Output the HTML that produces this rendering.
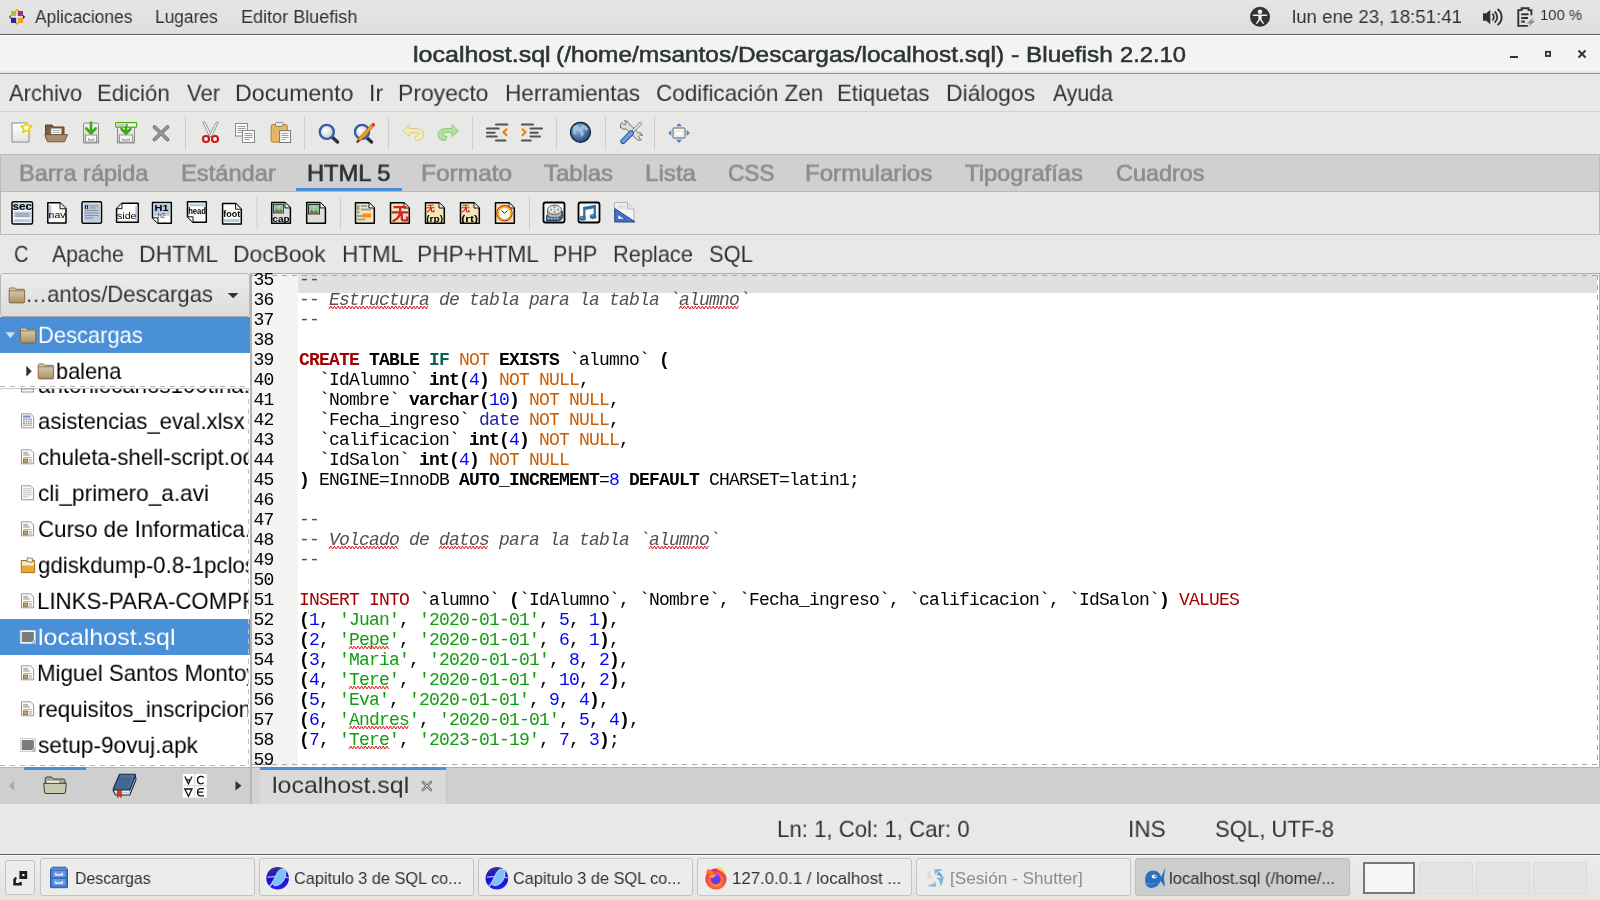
<!DOCTYPE html>
<html><head><meta charset="utf-8">
<style>
html,body{margin:0;padding:0;width:1600px;height:900px;overflow:hidden;background:#e8e8e7;font-family:"Liberation Sans",sans-serif;}
.r{position:absolute;}
.t{position:absolute;white-space:pre;line-height:1;transform-origin:0 0;font-family:"Liberation Sans",sans-serif;will-change:transform;}
.clip{position:absolute;overflow:hidden;}
svg{position:absolute;overflow:visible;}
.ln{position:absolute;left:0;width:21.5px;text-align:right;font-family:"Liberation Mono",monospace;font-size:18.0px;letter-spacing:-0.8018px;line-height:20px;color:#000;white-space:pre;will-change:transform;}
.cl{position:absolute;left:47px;font-family:"Liberation Mono",monospace;font-size:18.0px;letter-spacing:-0.8018px;line-height:20px;color:#000;white-space:pre;will-change:transform;}
</style></head><body>
<!-- top panel -->
<div class="r" style="left:0;top:0;width:1600px;height:34px;background:linear-gradient(#e6e6e6,#dedede);"></div>
<div class="r" style="left:0;top:34px;width:1600px;height:1px;background:#5f5f5f;"></div>
<div class="r" style="left:0;top:35px;width:1600px;height:1px;background:#ffffff;"></div>
<!-- title -->
<div class="r" style="left:0;top:36px;width:1600px;height:36px;background:#f3f3f3;"></div>
<div class="r" style="left:0;top:71px;width:1600px;height:2px;background:linear-gradient(#ececec,#e2e2e2);"></div>
<div class="r" style="left:0;top:73px;width:1600px;height:1px;background:#8f918b;"></div>
<div class="r" style="left:0;top:74px;width:1600px;height:1px;background:#eeeeed;"></div>
<!-- menu line -->
<div class="r" style="left:0;top:111px;width:1600px;height:1px;background:#d3d3d1;"></div>
<!-- tab bar -->
<div class="r" style="left:0;top:154px;width:1600px;height:37px;background:#d0d0d0;"></div>
<div class="r" style="left:0;top:154px;width:1600px;height:1px;background:#b9b9b7;"></div>
<div class="r" style="left:0;top:191px;width:1600px;height:1px;background:#b9b9b7;"></div>
<div class="r" style="left:0;top:154px;width:1px;height:81px;background:#b9b9b7;"></div>
<div class="r" style="left:1599px;top:154px;width:1px;height:81px;background:#b9b9b7;"></div>
<div class="r" style="left:296px;top:188px;width:106px;height:3px;background:#4a90d9;"></div>
<!-- html toolbar line -->
<div class="r" style="left:0;top:234px;width:1600px;height:1px;background:#b9b9b7;"></div>
<!-- snippets line -->
<div class="r" style="left:0;top:273px;width:1600px;height:1px;background:#b4b4b0;"></div>
<!-- sidebar -->
<div class="r" style="left:0;top:273px;width:250px;height:494px;background:#ffffff;"></div>
<div class="r" style="left:0;top:273px;width:250px;height:44px;background:linear-gradient(#ececeb,#dcdcdb);border:1px solid #b8b8b6;border-bottom-color:#a8a8a6;box-sizing:border-box;border-radius:3px;"></div>
<div class="r" style="left:0;top:317px;width:250px;height:36px;background:#4a90d9;"></div>
<div class="r" style="left:0;top:388px;width:249px;height:1px;background:#c8c8c6;"></div>
<div class="r" style="left:0;top:386px;width:248px;height:1px;background:repeating-linear-gradient(90deg,#b4b4b4 0 5px,transparent 5px 10px);"></div>
<div class="r" style="left:0;top:619px;width:250px;height:36px;background:#4a90d9;"></div>
<div class="r" style="left:0;top:765px;width:248px;height:1px;background:repeating-linear-gradient(90deg,#b4b4b4 0 5px,transparent 5px 10px);"></div>
<div class="r" style="left:248px;top:389px;width:1px;height:376px;background:repeating-linear-gradient(180deg,#c4c4c4 0 5px,transparent 5px 10px);"></div>
<!-- pane handle -->
<div class="r" style="left:250px;top:273px;width:2px;height:494px;background:#b2b4ae;"></div>
<!-- editor -->
<div class="r" style="left:252px;top:273px;width:1348px;height:494px;background:#ffffff;"></div>
<div class="r" style="left:252px;top:273px;width:46px;height:494px;background:#f4f4f3;"></div>
<div class="r" style="left:250px;top:273px;width:1350px;height:1px;background:#b0b0aa;"></div>
<div class="r" style="left:1599px;top:273px;width:1px;height:494px;background:#b0b0aa;"></div>
<div class="r" style="left:298px;top:274px;width:1299px;height:19px;background:#e0e0e0;"></div>
<div class="r" style="left:252px;top:275px;width:1345px;height:1px;background:repeating-linear-gradient(90deg,#a8a8a8 0 5px,transparent 5px 10px);"></div>
<div class="r" style="left:252px;top:764px;width:1345px;height:1px;background:repeating-linear-gradient(90deg,#a8a8a8 0 5px,transparent 5px 10px);"></div>
<div class="r" style="left:1597px;top:275px;width:1px;height:489px;background:repeating-linear-gradient(180deg,#a8a8a8 0 5px,transparent 5px 10px);"></div>
<div class="r" style="left:0;top:767px;width:1600px;height:1px;background:#b4b4ae;"></div>
<div class="clip" style="left:252px;top:273px;width:1345px;height:492px;">
<div class="ln" style="top:-2.79px">35</div>
<div class="cl" style="top:-2.79px"><span style="color:#505050">--</span></div>
<div class="ln" style="top:17.21px">36</div>
<div class="cl" style="top:17.21px"><span style="color:#505050">-- </span><span style="color:#505050;font-style:italic">Estructura de tabla para la tabla `alumno`</span></div>
<div class="ln" style="top:37.21px">37</div>
<div class="cl" style="top:37.21px"><span style="color:#505050">--</span></div>
<div class="ln" style="top:57.21px">38</div>
<div class="ln" style="top:77.21px">39</div>
<div class="cl" style="top:77.21px"><span style="color:#a40000;font-weight:700">CREATE</span><span style="color:#000000"> </span><span style="color:#000000;font-weight:700">TABLE</span><span style="color:#000000"> </span><span style="color:#0e5e58;font-weight:700">IF</span><span style="color:#000000"> </span><span style="color:#ce5c00">NOT</span><span style="color:#000000"> </span><span style="color:#000000;font-weight:700">EXISTS</span><span style="color:#000000"> `alumno` </span><span style="color:#000000;font-weight:700">(</span></div>
<div class="ln" style="top:97.21px">40</div>
<div class="cl" style="top:97.21px"><span style="color:#000000">  `IdAlumno` </span><span style="color:#000000;font-weight:700">int(</span><span style="color:#0000ff">4</span><span style="color:#000000;font-weight:700">)</span><span style="color:#000000"> </span><span style="color:#ce5c00">NOT NULL</span><span style="color:#000000">,</span></div>
<div class="ln" style="top:117.21px">41</div>
<div class="cl" style="top:117.21px"><span style="color:#000000">  `Nombre` </span><span style="color:#000000;font-weight:700">varchar(</span><span style="color:#0000ff">10</span><span style="color:#000000;font-weight:700">)</span><span style="color:#000000"> </span><span style="color:#ce5c00">NOT NULL</span><span style="color:#000000">,</span></div>
<div class="ln" style="top:137.21px">42</div>
<div class="cl" style="top:137.21px"><span style="color:#000000">  `Fecha_ingreso` </span><span style="color:#2222a0">date</span><span style="color:#000000"> </span><span style="color:#ce5c00">NOT NULL</span><span style="color:#000000">,</span></div>
<div class="ln" style="top:157.21px">43</div>
<div class="cl" style="top:157.21px"><span style="color:#000000">  `calificacion` </span><span style="color:#000000;font-weight:700">int(</span><span style="color:#0000ff">4</span><span style="color:#000000;font-weight:700">)</span><span style="color:#000000"> </span><span style="color:#ce5c00">NOT NULL</span><span style="color:#000000">,</span></div>
<div class="ln" style="top:177.21px">44</div>
<div class="cl" style="top:177.21px"><span style="color:#000000">  `IdSalon` </span><span style="color:#000000;font-weight:700">int(</span><span style="color:#0000ff">4</span><span style="color:#000000;font-weight:700">)</span><span style="color:#000000"> </span><span style="color:#ce5c00">NOT NULL</span></div>
<div class="ln" style="top:197.21px">45</div>
<div class="cl" style="top:197.21px"><span style="color:#000000;font-weight:700">)</span><span style="color:#000000"> ENGINE=InnoDB </span><span style="color:#000000;font-weight:700">AUTO_INCREMENT</span><span style="color:#000000">=</span><span style="color:#0000ff">8</span><span style="color:#000000"> </span><span style="color:#000000;font-weight:700">DEFAULT</span><span style="color:#000000"> CHARSET=latin1;</span></div>
<div class="ln" style="top:217.21px">46</div>
<div class="ln" style="top:237.21px">47</div>
<div class="cl" style="top:237.21px"><span style="color:#505050">--</span></div>
<div class="ln" style="top:257.21px">48</div>
<div class="cl" style="top:257.21px"><span style="color:#505050">-- </span><span style="color:#505050;font-style:italic">Volcado de datos para la tabla `alumno`</span></div>
<div class="ln" style="top:277.21px">49</div>
<div class="cl" style="top:277.21px"><span style="color:#505050">--</span></div>
<div class="ln" style="top:297.21px">50</div>
<div class="ln" style="top:317.21px">51</div>
<div class="cl" style="top:317.21px"><span style="color:#a40000">INSERT INTO</span><span style="color:#000000"> `alumno` </span><span style="color:#000000;font-weight:700">(</span><span style="color:#000000">`IdAlumno`, `Nombre`, `Fecha_ingreso`, `calificacion`, `IdSalon`</span><span style="color:#000000;font-weight:700">)</span><span style="color:#000000"> </span><span style="color:#a40000">VALUES</span></div>
<div class="ln" style="top:337.21px">52</div>
<div class="cl" style="top:337.21px"><span style="color:#000000;font-weight:700">(</span><span style="color:#0000ff">1</span><span style="color:#000000">, </span><span style="color:#109d10">&#x27;Juan&#x27;</span><span style="color:#000000">, </span><span style="color:#109d10">&#x27;2020-01-01&#x27;</span><span style="color:#000000">, </span><span style="color:#0000ff">5</span><span style="color:#000000">, </span><span style="color:#0000ff">1</span><span style="color:#000000;font-weight:700">)</span><span style="color:#000000">,</span></div>
<div class="ln" style="top:357.21px">53</div>
<div class="cl" style="top:357.21px"><span style="color:#000000;font-weight:700">(</span><span style="color:#0000ff">2</span><span style="color:#000000">, </span><span style="color:#109d10">&#x27;Pepe&#x27;</span><span style="color:#000000">, </span><span style="color:#109d10">&#x27;2020-01-01&#x27;</span><span style="color:#000000">, </span><span style="color:#0000ff">6</span><span style="color:#000000">, </span><span style="color:#0000ff">1</span><span style="color:#000000;font-weight:700">)</span><span style="color:#000000">,</span></div>
<div class="ln" style="top:377.21px">54</div>
<div class="cl" style="top:377.21px"><span style="color:#000000;font-weight:700">(</span><span style="color:#0000ff">3</span><span style="color:#000000">, </span><span style="color:#109d10">&#x27;Maria&#x27;</span><span style="color:#000000">, </span><span style="color:#109d10">&#x27;2020-01-01&#x27;</span><span style="color:#000000">, </span><span style="color:#0000ff">8</span><span style="color:#000000">, </span><span style="color:#0000ff">2</span><span style="color:#000000;font-weight:700">)</span><span style="color:#000000">,</span></div>
<div class="ln" style="top:397.21px">55</div>
<div class="cl" style="top:397.21px"><span style="color:#000000;font-weight:700">(</span><span style="color:#0000ff">4</span><span style="color:#000000">, </span><span style="color:#109d10">&#x27;Tere&#x27;</span><span style="color:#000000">, </span><span style="color:#109d10">&#x27;2020-01-01&#x27;</span><span style="color:#000000">, </span><span style="color:#0000ff">10</span><span style="color:#000000">, </span><span style="color:#0000ff">2</span><span style="color:#000000;font-weight:700">)</span><span style="color:#000000">,</span></div>
<div class="ln" style="top:417.21px">56</div>
<div class="cl" style="top:417.21px"><span style="color:#000000;font-weight:700">(</span><span style="color:#0000ff">5</span><span style="color:#000000">, </span><span style="color:#109d10">&#x27;Eva&#x27;</span><span style="color:#000000">, </span><span style="color:#109d10">&#x27;2020-01-01&#x27;</span><span style="color:#000000">, </span><span style="color:#0000ff">9</span><span style="color:#000000">, </span><span style="color:#0000ff">4</span><span style="color:#000000;font-weight:700">)</span><span style="color:#000000">,</span></div>
<div class="ln" style="top:437.21px">57</div>
<div class="cl" style="top:437.21px"><span style="color:#000000;font-weight:700">(</span><span style="color:#0000ff">6</span><span style="color:#000000">, </span><span style="color:#109d10">&#x27;Andres&#x27;</span><span style="color:#000000">, </span><span style="color:#109d10">&#x27;2020-01-01&#x27;</span><span style="color:#000000">, </span><span style="color:#0000ff">5</span><span style="color:#000000">, </span><span style="color:#0000ff">4</span><span style="color:#000000;font-weight:700">)</span><span style="color:#000000">,</span></div>
<div class="ln" style="top:457.21px">58</div>
<div class="cl" style="top:457.21px"><span style="color:#000000;font-weight:700">(</span><span style="color:#0000ff">7</span><span style="color:#000000">, </span><span style="color:#109d10">&#x27;Tere&#x27;</span><span style="color:#000000">, </span><span style="color:#109d10">&#x27;2023-01-19&#x27;</span><span style="color:#000000">, </span><span style="color:#0000ff">7</span><span style="color:#000000">, </span><span style="color:#0000ff">3</span><span style="color:#000000;font-weight:700">)</span><span style="color:#000000">;</span></div>
<div class="ln" style="top:477.21px">59</div>
</div>
<svg style="left:329.0px;top:306.3px" width="100" height="4"><polyline points="0.0,3 1.8,0 3.6,3 5.4,0 7.2,3 9.0,0 10.8,3 12.6,0 14.4,3 16.2,0 18.0,3 19.8,0 21.6,3 23.4,0 25.2,3 27.0,0 28.8,3 30.6,0 32.4,3 34.2,0 36.0,3 37.8,0 39.6,3 41.4,0 43.2,3 45.0,0 46.8,3 48.6,0 50.4,3 52.2,0 54.0,3 55.8,0 57.6,3 59.4,0 61.2,3 63.0,0 64.8,3 66.6,0 68.4,3 70.2,0 72.0,3 73.8,0 75.6,3 77.4,0 79.2,3 81.0,0 82.8,3 84.6,0 86.4,3 88.2,0 90.0,3 91.8,0 93.6,3 95.4,0 97.2,3 99.0,0" fill="none" stroke="#e01b24" stroke-width="1"/></svg>
<svg style="left:679.0px;top:306.3px" width="60" height="4"><polyline points="0.0,3 1.8,0 3.6,3 5.4,0 7.2,3 9.0,0 10.8,3 12.6,0 14.4,3 16.2,0 18.0,3 19.8,0 21.6,3 23.4,0 25.2,3 27.0,0 28.8,3 30.6,0 32.4,3 34.2,0 36.0,3 37.8,0 39.6,3 41.4,0 43.2,3 45.0,0 46.8,3 48.6,0 50.4,3 52.2,0 54.0,3 55.8,0 57.6,3 59.4,0" fill="none" stroke="#e01b24" stroke-width="1"/></svg>
<svg style="left:329.0px;top:546.3px" width="70" height="4"><polyline points="0.0,3 1.8,0 3.6,3 5.4,0 7.2,3 9.0,0 10.8,3 12.6,0 14.4,3 16.2,0 18.0,3 19.8,0 21.6,3 23.4,0 25.2,3 27.0,0 28.8,3 30.6,0 32.4,3 34.2,0 36.0,3 37.8,0 39.6,3 41.4,0 43.2,3 45.0,0 46.8,3 48.6,0 50.4,3 52.2,0 54.0,3 55.8,0 57.6,3 59.4,0 61.2,3 63.0,0 64.8,3 66.6,0 68.4,3" fill="none" stroke="#e01b24" stroke-width="1"/></svg>
<svg style="left:439.0px;top:546.3px" width="50" height="4"><polyline points="0.0,3 1.8,0 3.6,3 5.4,0 7.2,3 9.0,0 10.8,3 12.6,0 14.4,3 16.2,0 18.0,3 19.8,0 21.6,3 23.4,0 25.2,3 27.0,0 28.8,3 30.6,0 32.4,3 34.2,0 36.0,3 37.8,0 39.6,3 41.4,0 43.2,3 45.0,0 46.8,3 48.6,0" fill="none" stroke="#e01b24" stroke-width="1"/></svg>
<svg style="left:649.0px;top:546.3px" width="60" height="4"><polyline points="0.0,3 1.8,0 3.6,3 5.4,0 7.2,3 9.0,0 10.8,3 12.6,0 14.4,3 16.2,0 18.0,3 19.8,0 21.6,3 23.4,0 25.2,3 27.0,0 28.8,3 30.6,0 32.4,3 34.2,0 36.0,3 37.8,0 39.6,3 41.4,0 43.2,3 45.0,0 46.8,3 48.6,0 50.4,3 52.2,0 54.0,3 55.8,0 57.6,3 59.4,0" fill="none" stroke="#e01b24" stroke-width="1"/></svg>
<svg style="left:349.0px;top:646.3px" width="40" height="4"><polyline points="0.0,3 1.8,0 3.6,3 5.4,0 7.2,3 9.0,0 10.8,3 12.6,0 14.4,3 16.2,0 18.0,3 19.8,0 21.6,3 23.4,0 25.2,3 27.0,0 28.8,3 30.6,0 32.4,3 34.2,0 36.0,3 37.8,0 39.6,3" fill="none" stroke="#e01b24" stroke-width="1"/></svg>
<svg style="left:349.0px;top:686.3px" width="40" height="4"><polyline points="0.0,3 1.8,0 3.6,3 5.4,0 7.2,3 9.0,0 10.8,3 12.6,0 14.4,3 16.2,0 18.0,3 19.8,0 21.6,3 23.4,0 25.2,3 27.0,0 28.8,3 30.6,0 32.4,3 34.2,0 36.0,3 37.8,0 39.6,3" fill="none" stroke="#e01b24" stroke-width="1"/></svg>
<svg style="left:349.0px;top:726.3px" width="60" height="4"><polyline points="0.0,3 1.8,0 3.6,3 5.4,0 7.2,3 9.0,0 10.8,3 12.6,0 14.4,3 16.2,0 18.0,3 19.8,0 21.6,3 23.4,0 25.2,3 27.0,0 28.8,3 30.6,0 32.4,3 34.2,0 36.0,3 37.8,0 39.6,3 41.4,0 43.2,3 45.0,0 46.8,3 48.6,0 50.4,3 52.2,0 54.0,3 55.8,0 57.6,3 59.4,0" fill="none" stroke="#e01b24" stroke-width="1"/></svg>
<svg style="left:349.0px;top:746.3px" width="40" height="4"><polyline points="0.0,3 1.8,0 3.6,3 5.4,0 7.2,3 9.0,0 10.8,3 12.6,0 14.4,3 16.2,0 18.0,3 19.8,0 21.6,3 23.4,0 25.2,3 27.0,0 28.8,3 30.6,0 32.4,3 34.2,0 36.0,3 37.8,0 39.6,3" fill="none" stroke="#e01b24" stroke-width="1"/></svg>
<!-- bottom tabs -->
<div class="r" style="left:0;top:768px;width:1600px;height:36px;background:#cfcfcf;"></div>
<div class="r" style="left:24px;top:767px;width:62px;height:3px;background:#4a90d9;"></div>
<div class="r" style="left:250px;top:767px;width:2px;height:37px;background:#b8b8b4;"></div>
<div class="r" style="left:252px;top:768px;width:8px;height:36px;background:#d4d4d4;"></div>
<div class="r" style="left:260px;top:768px;width:186px;height:36px;background:#dadada;"></div>
<div class="r" style="left:260px;top:767px;width:186px;height:3px;background:#4a90d9;"></div>
<div class="r" style="left:446px;top:768px;width:1px;height:36px;background:#c4c4c4;"></div>
<!-- taskbar -->
<div class="r" style="left:0;top:854px;width:1600px;height:1px;background:#606060;"></div>
<div class="r" style="left:0;top:855px;width:1600px;height:1px;background:#f8f8f8;"></div>
<div class="r" style="left:0;top:856px;width:1600px;height:44px;background:linear-gradient(#ebebea,#e4e4e3);"></div>
<div class="r" style="left:5px;top:860px;width:30px;height:35px;border:1px solid #c4c4c2;border-radius:3px;box-sizing:border-box;background:#ececeb;"></div>
<div class="r" style="left:40px;top:858px;width:215px;height:38px;border:1px solid #c4c4c2;border-radius:3px;box-sizing:border-box;background:#ececeb;"></div>
<div class="r" style="left:259px;top:858px;width:215px;height:38px;border:1px solid #c4c4c2;border-radius:3px;box-sizing:border-box;background:#ececeb;"></div>
<div class="r" style="left:478px;top:858px;width:215px;height:38px;border:1px solid #c4c4c2;border-radius:3px;box-sizing:border-box;background:#ececeb;"></div>
<div class="r" style="left:697px;top:858px;width:215px;height:38px;border:1px solid #c4c4c2;border-radius:3px;box-sizing:border-box;background:#ececeb;"></div>
<div class="r" style="left:916px;top:858px;width:215px;height:38px;border:1px solid #c4c4c2;border-radius:3px;box-sizing:border-box;background:#ececeb;"></div>
<div class="r" style="left:1135px;top:858px;width:215px;height:38px;border:1px solid #bdbdbb;border-radius:3px;box-sizing:border-box;background:#cdcdcd;"></div>
<div class="r" style="left:1363px;top:862px;width:52px;height:32px;border:2px solid #787878;box-sizing:border-box;background:#f6f5f4;"></div>
<div class="r" style="left:1419px;top:862px;width:54px;height:32px;border:1px solid #dadad8;border-radius:2px;box-sizing:border-box;background:#e4e4e3;"></div>
<div class="r" style="left:1476px;top:862px;width:54px;height:32px;border:1px solid #dadad8;border-radius:2px;box-sizing:border-box;background:#e4e4e3;"></div>
<div class="r" style="left:1533px;top:862px;width:54px;height:32px;border:1px solid #dadad8;border-radius:2px;box-sizing:border-box;background:#e4e4e3;"></div>
<div class="t" style="left:35.40px;top:8.00px;font-size:18.75px;font-weight:400;color:#2e3436;transform:scale(0.9248,1.0000);transform-origin:0 15px;">Aplicaciones</div>
<div class="t" style="left:154.58px;top:8.00px;font-size:18.75px;font-weight:400;color:#2e3436;transform:scale(0.9242,1.0000);transform-origin:0 15px;">Lugares</div>
<div class="t" style="left:240.54px;top:8.00px;font-size:18.75px;font-weight:400;color:#2e3436;transform:scale(0.9622,1.0000);transform-origin:0 15px;">Editor Bluefish</div>
<div class="t" style="left:1292.01px;top:8.00px;font-size:18.75px;font-weight:400;color:#2e3436;transform:scale(0.9941,1.0000);transform-origin:0 15px;">lun ene 23, 18:51:41</div>
<div class="t" style="left:1539.51px;top:7.00px;font-size:15px;font-weight:400;color:#2e3436;transform:scale(0.9878,1.0000);transform-origin:0 13px;">100 %</div>
<div class="t" style="left:412.85px;top:44.00px;font-size:21.8px;font-weight:400;color:#2e3436;transform:scale(1.1475,1.0000);transform-origin:0 18px;-webkit-text-stroke:0.55px #2e3436;">localhost.sql</div>
<div class="t" style="left:555.78px;top:44.00px;font-size:21.8px;font-weight:400;color:#2e3436;transform:scale(1.1209,1.0000);transform-origin:0 18px;-webkit-text-stroke:0.55px #2e3436;">(/home/msantos/Descargas/localhost.sql)</div>
<div class="t" style="left:1010.76px;top:44.00px;font-size:21.8px;font-weight:400;color:#2e3436;transform:scale(1.1417,1.0000);transform-origin:0 18px;-webkit-text-stroke:0.55px #2e3436;">-</div>
<div class="t" style="left:1025.78px;top:44.00px;font-size:21.8px;font-weight:400;color:#2e3436;transform:scale(1.1184,1.0000);transform-origin:0 18px;-webkit-text-stroke:0.55px #2e3436;">Bluefish</div>
<div class="t" style="left:1119.51px;top:44.00px;font-size:21.8px;font-weight:400;color:#2e3436;transform:scale(1.0873,1.0000);transform-origin:0 18px;-webkit-text-stroke:0.55px #2e3436;">2.2.10</div>
<div class="t" style="left:8.75px;top:82.00px;font-size:23.2px;font-weight:400;color:#2e3436;transform:scale(0.9448,0.9580);transform-origin:0 19px;">Archivo</div>
<div class="t" style="left:97.09px;top:82.00px;font-size:23.2px;font-weight:400;color:#2e3436;transform:scale(0.9548,0.9580);transform-origin:0 19px;">Edición</div>
<div class="t" style="left:186.50px;top:82.00px;font-size:23.2px;font-weight:400;color:#2e3436;transform:scale(0.9514,0.9580);transform-origin:0 19px;">Ver</div>
<div class="t" style="left:235.00px;top:82.00px;font-size:23.2px;font-weight:400;color:#2e3436;transform:scale(0.9983,0.9580);transform-origin:0 19px;">Documento</div>
<div class="t" style="left:369.00px;top:82.00px;font-size:23.2px;font-weight:400;color:#2e3436;transform:scale(1.0000,0.9580);transform-origin:0 19px;">Ir</div>
<div class="t" style="left:398.02px;top:82.00px;font-size:23.2px;font-weight:400;color:#2e3436;transform:scale(0.9888,0.9580);transform-origin:0 19px;">Proyecto</div>
<div class="t" style="left:504.56px;top:82.00px;font-size:23.2px;font-weight:400;color:#2e3436;transform:scale(0.9713,0.9580);transform-origin:0 19px;">Herramientas</div>
<div class="t" style="left:656.03px;top:82.00px;font-size:23.2px;font-weight:400;color:#2e3436;transform:scale(0.9682,0.9580);transform-origin:0 19px;">Codificación Zen</div>
<div class="t" style="left:837.49px;top:82.00px;font-size:23.2px;font-weight:400;color:#2e3436;transform:scale(0.9574,0.9580);transform-origin:0 19px;">Etiquetas</div>
<div class="t" style="left:945.82px;top:82.00px;font-size:23.2px;font-weight:400;color:#2e3436;transform:scale(0.9875,0.9580);transform-origin:0 19px;">Diálogos</div>
<div class="t" style="left:1052.50px;top:82.00px;font-size:23.2px;font-weight:400;color:#2e3436;transform:scale(0.9136,0.9580);transform-origin:0 19px;">Ayuda</div>
<div class="t" style="left:19.37px;top:162.00px;font-size:23.2px;font-weight:400;color:#8b8e8f;transform:scale(1.0143,0.9580);transform-origin:0 19px;-webkit-text-stroke:0.7px #8b8e8f;">Barra rápida</div>
<div class="t" style="left:180.56px;top:162.00px;font-size:23.2px;font-weight:400;color:#8b8e8f;transform:scale(1.0220,0.9580);transform-origin:0 19px;-webkit-text-stroke:0.7px #8b8e8f;">Estándar</div>
<div class="t" style="left:307.18px;top:162.00px;font-size:23.2px;font-weight:400;color:#2e3436;transform:scale(1.0225,0.9580);transform-origin:0 19px;-webkit-text-stroke:0.7px #2e3436;">HTML 5</div>
<div class="t" style="left:420.89px;top:162.00px;font-size:23.2px;font-weight:400;color:#8b8e8f;transform:scale(1.0565,0.9580);transform-origin:0 19px;-webkit-text-stroke:0.7px #8b8e8f;">Formato</div>
<div class="t" style="left:544.25px;top:162.00px;font-size:23.2px;font-weight:400;color:#8b8e8f;transform:scale(1.0299,0.9580);transform-origin:0 19px;-webkit-text-stroke:0.7px #8b8e8f;">Tablas</div>
<div class="t" style="left:644.91px;top:162.00px;font-size:23.2px;font-weight:400;color:#8b8e8f;transform:scale(1.0426,0.9580);transform-origin:0 19px;-webkit-text-stroke:0.7px #8b8e8f;">Lista</div>
<div class="t" style="left:728.03px;top:162.00px;font-size:23.2px;font-weight:400;color:#8b8e8f;transform:scale(0.9728,0.9580);transform-origin:0 19px;-webkit-text-stroke:0.7px #8b8e8f;">CSS</div>
<div class="t" style="left:805.42px;top:162.00px;font-size:23.2px;font-weight:400;color:#8b8e8f;transform:scale(1.0392,0.9580);transform-origin:0 19px;-webkit-text-stroke:0.7px #8b8e8f;">Formularios</div>
<div class="t" style="left:965.30px;top:162.00px;font-size:23.2px;font-weight:400;color:#8b8e8f;transform:scale(1.0235,0.9580);transform-origin:0 19px;-webkit-text-stroke:0.7px #8b8e8f;">Tipografías</div>
<div class="t" style="left:1115.59px;top:162.00px;font-size:23.2px;font-weight:400;color:#8b8e8f;transform:scale(1.0093,0.9580);transform-origin:0 19px;-webkit-text-stroke:0.7px #8b8e8f;">Cuadros</div>
<div class="t" style="left:14.13px;top:243.00px;font-size:23.2px;font-weight:400;color:#2e3436;transform:scale(0.8667,0.9580);transform-origin:0 19px;">C</div>
<div class="t" style="left:51.75px;top:243.00px;font-size:23.2px;font-weight:400;color:#2e3436;transform:scale(0.9135,0.9580);transform-origin:0 19px;">Apache</div>
<div class="t" style="left:139.27px;top:243.00px;font-size:23.2px;font-weight:400;color:#2e3436;transform:scale(0.9903,0.9580);transform-origin:0 19px;">DHTML</div>
<div class="t" style="left:233.03px;top:243.00px;font-size:23.2px;font-weight:400;color:#2e3436;transform:scale(0.9837,0.9580);transform-origin:0 19px;">DocBook</div>
<div class="t" style="left:342.07px;top:243.00px;font-size:23.2px;font-weight:400;color:#2e3436;transform:scale(0.9672,0.9580);transform-origin:0 19px;">HTML</div>
<div class="t" style="left:417.29px;top:243.00px;font-size:23.2px;font-weight:400;color:#2e3436;transform:scale(0.9795,0.9580);transform-origin:0 19px;">PHP+HTML</div>
<div class="t" style="left:553.14px;top:243.00px;font-size:23.2px;font-weight:400;color:#2e3436;transform:scale(0.9278,0.9580);transform-origin:0 19px;">PHP</div>
<div class="t" style="left:613.12px;top:243.00px;font-size:23.2px;font-weight:400;color:#2e3436;transform:scale(0.9390,0.9580);transform-origin:0 19px;">Replace</div>
<div class="t" style="left:708.56px;top:243.00px;font-size:23.2px;font-weight:400;color:#2e3436;transform:scale(0.9444,0.9580);transform-origin:0 19px;">SQL</div>
<div class="t" style="left:271.67px;top:774.00px;font-size:23.2px;font-weight:400;color:#2e3436;transform:scale(1.0756,0.9580);transform-origin:0 19px;">localhost.sql</div>
<div class="t" style="left:777.48px;top:818.00px;font-size:23.2px;font-weight:400;color:#2e3436;transform:scale(0.9576,0.9580);transform-origin:0 19px;">Ln: 1, Col: 1, Car: 0</div>
<div class="t" style="left:1127.76px;top:818.00px;font-size:23.2px;font-weight:400;color:#2e3436;transform:scale(0.9722,0.9580);transform-origin:0 19px;">INS</div>
<div class="t" style="left:1214.65px;top:818.00px;font-size:23.2px;font-weight:400;color:#2e3436;transform:scale(0.9528,0.9580);transform-origin:0 19px;">SQL, UTF-8</div>
<div class="t" style="left:74.57px;top:870.00px;font-size:17px;font-weight:400;color:#2e3436;transform:scale(0.9313,1.0000);transform-origin:0 14px;">Descargas</div>
<div class="t" style="left:293.64px;top:870.00px;font-size:17px;font-weight:400;color:#2e3436;transform:scale(0.9578,1.0000);transform-origin:0 14px;">Capitulo 3 de SQL co...</div>
<div class="t" style="left:512.64px;top:870.00px;font-size:17px;font-weight:400;color:#2e3436;transform:scale(0.9584,1.0000);transform-origin:0 14px;">Capitulo 3 de SQL co...</div>
<div class="t" style="left:732.01px;top:870.00px;font-size:17px;font-weight:400;color:#2e3436;transform:scale(0.9899,1.0000);transform-origin:0 14px;">127.0.0.1 / localhost ...</div>
<div class="t" style="left:950.24px;top:870.00px;font-size:17px;font-weight:400;color:#8b8e8f;transform:scale(1.0105,1.0000);transform-origin:0 14px;">[Sesión - Shutter]</div>
<div class="t" style="left:1169.32px;top:870.00px;font-size:17px;font-weight:400;color:#2e3436;transform:scale(0.9768,1.0000);transform-origin:0 14px;">localhost.sql (/home/...</div>
<div class="clip" style="left:0;top:0;width:248px;height:764px;"><div class="t" style="left:25.04px;top:283.00px;font-size:23.2px;font-weight:400;color:#2e3436;transform:scale(0.9534,0.9580);transform-origin:0 19px;">…antos/Descargas</div>
<div class="t" style="left:37.51px;top:324.00px;font-size:23.2px;font-weight:400;color:#ffffff;transform:scale(0.9454,0.9580);transform-origin:0 19px;">Descargas</div>
<div class="t" style="left:55.76px;top:360.00px;font-size:23.2px;font-weight:400;color:#000000;transform:scale(0.9377,0.9580);transform-origin:0 19px;">balena</div>
<div class="t" style="left:37.80px;top:410.00px;font-size:23.2px;font-weight:400;color:#000000;transform:scale(0.9542,0.9580);transform-origin:0 19px;">asistencias_eval.xlsx</div>
<div class="t" style="left:37.79px;top:446.00px;font-size:23.2px;font-weight:400;color:#000000;transform:scale(0.9612,0.9580);transform-origin:0 19px;">chuleta-shell-script.odt</div>
<div class="t" style="left:37.77px;top:482.00px;font-size:23.2px;font-weight:400;color:#000000;transform:scale(0.9760,0.9580);transform-origin:0 19px;">cli_primero_a.avi</div>
<div class="t" style="left:37.79px;top:518.00px;font-size:23.2px;font-weight:400;color:#000000;transform:scale(0.9612,0.9580);transform-origin:0 19px;">Curso de Informatica.odt</div>
<div class="t" style="left:37.79px;top:554.00px;font-size:23.2px;font-weight:400;color:#000000;transform:scale(0.9612,0.9580);transform-origin:0 19px;">gdiskdump-0.8-1pclos.rpm</div>
<div class="t" style="left:36.83px;top:590.00px;font-size:23.2px;font-weight:400;color:#000000;transform:scale(0.9612,0.9580);transform-origin:0 19px;">LINKS-PARA-COMPRAR.odt</div>
<div class="t" style="left:37.67px;top:626.00px;font-size:23.2px;font-weight:400;color:#ffffff;transform:scale(1.0772,0.9580);transform-origin:0 19px;">localhost.sql</div>
<div class="t" style="left:36.83px;top:662.00px;font-size:23.2px;font-weight:400;color:#000000;transform:scale(0.9612,0.9580);transform-origin:0 19px;">Miguel Santos Montoya.odt</div>
<div class="t" style="left:37.79px;top:698.00px;font-size:23.2px;font-weight:400;color:#000000;transform:scale(0.9612,0.9580);transform-origin:0 19px;">requisitos_inscripcion.odt</div>
<div class="t" style="left:37.77px;top:734.00px;font-size:23.2px;font-weight:400;color:#000000;transform:scale(0.9770,0.9580);transform-origin:0 19px;">setup-9ovuj.apk</div></div>
<div class="clip" style="left:0;top:389px;width:248px;height:20px;"><div class="t" style="left:37.79px;top:-15.00px;font-size:23.2px;font-weight:400;color:#000000;transform:scale(0.9612,0.9580);transform-origin:0 19px;">antoniocarlos100tina.pdf</div></div>
<svg style="left:0;top:0" width="1600" height="900" viewBox="0 0 1600 900">
<defs>
<linearGradient id="gPage" x1="0" y1="0" x2="0" y2="1"><stop offset="0" stop-color="#ffffff"/><stop offset="1" stop-color="#e4e4e2"/></linearGradient>
<linearGradient id="gCab" x1="0" y1="0" x2="0" y2="1"><stop offset="0" stop-color="#f4f4f4"/><stop offset="1" stop-color="#c8c8c6"/></linearGradient>
<radialGradient id="gGlobe" cx="0.4" cy="0.35" r="0.7"><stop offset="0" stop-color="#a4c4e6"/><stop offset="0.55" stop-color="#4a78aa"/><stop offset="1" stop-color="#213f62"/></radialGradient>
<radialGradient id="gLens" cx="0.4" cy="0.4" r="0.6"><stop offset="0" stop-color="#ffffff"/><stop offset="1" stop-color="#c9cdd2"/></radialGradient>
<linearGradient id="gFolder" x1="0" y1="0" x2="0" y2="1"><stop offset="0" stop-color="#e2d4b8"/><stop offset="1" stop-color="#a8906a"/></linearGradient>
<linearGradient id="gBlueCirc" x1="0" y1="0" x2="0" y2="1"><stop offset="0" stop-color="#3a2ea0"/><stop offset="0.5" stop-color="#1a10c8"/><stop offset="1" stop-color="#2a22e8"/></linearGradient>
<radialGradient id="gFF" cx="0.5" cy="0.6" r="0.6"><stop offset="0" stop-color="#ffbd2e"/><stop offset="0.6" stop-color="#ff5a36"/><stop offset="1" stop-color="#e31587"/></radialGradient>
</defs>

<!-- ===== top panel ===== -->
<g transform="translate(17,16.8) rotate(45)">
  <rect x="-8" y="-1" width="16" height="2" fill="#9c9c9c" opacity="0"/>
</g>
<g>
  <polygon points="17,8.8 19.5,11.3 14.5,11.3" fill="#f0a010"/>
  <polygon points="17,25 19.5,22.5 14.5,22.5" fill="#8cc63f"/>
  <polygon points="8.8,16.9 11.3,14.4 11.3,19.4" fill="#9c3e9c"/>
  <polygon points="25.2,16.9 22.7,14.4 22.7,19.4" fill="#262577"/>
  <rect x="11" y="11" width="5.5" height="5.5" fill="#9ccc3c"/>
  <rect x="17.5" y="11" width="5.5" height="5.5" fill="#9c2e8c"/>
  <rect x="11" y="17.5" width="5.5" height="5.5" fill="#262690"/>
  <rect x="17.5" y="17.5" width="5.5" height="5.5" fill="#f0a020"/>
  <path d="M11 16.9 H23 M17 11 V23" stroke="#ffffff" stroke-width="1"/>
</g>
<!-- accessibility -->
<circle cx="1260" cy="16.8" r="10" fill="#2e3436"/>
<circle cx="1260" cy="11.8" r="2.3" fill="#f0f0f0"/>
<path d="M1253.5 15.2 H1266.5" stroke="#f0f0f0" stroke-width="1.6" stroke-linecap="round"/>
<path d="M1258.2 15 L1261.8 15 L1261.6 19.5 L1264.2 23.6 L1263 24 L1260 20 L1257 24 L1255.8 23.6 L1258.4 19.5 Z" fill="#f0f0f0"/>
<!-- speaker -->
<path d="M1483 13.3 H1486.3 L1490.3 9.8 V24.2 L1486.3 20.8 H1483 Z" fill="#2e3436"/>
<path d="M1492.3 13.8 A4 4 0 0 1 1492.3 20.2" stroke="#2e3436" stroke-width="1.8" fill="none"/>
<path d="M1494.6 11.5 A7 7 0 0 1 1494.6 22.5" stroke="#2e3436" stroke-width="1.8" fill="none"/>
<path d="M1497.5 8.9 A10 10 0 0 1 1497.5 25.1" stroke="#2e3436" stroke-width="1.9" fill="none"/>
<!-- battery -->
<path d="M1527.8 25.9 H1518.3 V10.1 H1521.6 V8.3 H1528.5 V10.1 H1531.4 V15.2" stroke="#2e3436" stroke-width="1.9" fill="none" stroke-linejoin="miter"/>
<rect x="1521.2" y="13.3" width="7.3" height="2" fill="#2e3436"/>
<rect x="1521.2" y="17" width="6.8" height="2" fill="#2e3436"/>
<rect x="1521.2" y="20.6" width="3.8" height="2" fill="#2e3436"/>
<path d="M1533.5 17.2 L1526.6 23.6 H1530.2 L1528 27 L1535.3 20.7 H1531.6 Z" fill="#8d9090"/>
<!-- ===== window buttons ===== -->
<rect x="1510" y="56" width="8" height="2" fill="#2e3436"/>
<rect x="1545.9" y="51.8" width="4.2" height="4.2" fill="none" stroke="#2e3436" stroke-width="1.8"/>
<path d="M1578.5 50.5 L1585.5 57.5 M1585.5 50.5 L1578.5 57.5" stroke="#2e3436" stroke-width="1.9"/>

<!-- ===== main toolbar ===== -->
<!-- new -->
<path d="M12 123 H25 L29 127 V142 H12 Z" fill="url(#gPage)" stroke="#8a8a88" stroke-width="1"/>
<polygon points="26.4,122.3 28.1,125.8 31.8,126.1 29,128.6 29.9,132.3 26.4,130.3 22.9,132.3 23.8,128.6 21,126.1 24.7,125.8" fill="#ffffff" stroke="#e8d012" stroke-width="1.6" stroke-linejoin="round"/>
<!-- open -->
<path d="M45.5 125 H52 L54 127 H64 V138 H45.5 Z" fill="#7b5c3e" stroke="#5e452c" stroke-width="1"/>
<rect x="51" y="128.3" width="10.5" height="8" fill="#f8f8f6" stroke="#9a9a98" stroke-width="0.6"/>
<path d="M52.5 130.5 H60 M52.5 132.5 H60 M52.5 134.5 H60" stroke="#a0a0a0" stroke-width="0.8"/>
<path d="M44.8 134.6 H67.6 L64.5 141.8 H47.5 Z" fill="#a58c6c" stroke="#7a5a35" stroke-width="1"/>
<!-- save -->
<path d="M83.5 124.5 Q83.5 123 85 123 H97 Q98.5 123 98.5 124.5 V143 H83.5 Z" fill="url(#gCab)" stroke="#8a8a88" stroke-width="1"/>
<rect x="85.5" y="135" width="11" height="7" fill="#f4f4f4" stroke="#888" stroke-width="0.8"/>
<path d="M88.5 138.5 V140 H93.5 V138.5" stroke="#777" stroke-width="0.9" fill="none"/>
<path d="M91 122.5 V132.5 M86.3 128.5 L91 133.3 L95.7 128.5" stroke="#3caa12" stroke-width="2.6" fill="none" stroke-linecap="round" stroke-linejoin="round"/>
<!-- save as -->
<path d="M117.5 127 H134.5 V143 H117.5 Z" fill="url(#gCab)" stroke="#8a8a88" stroke-width="1"/>
<rect x="119.5" y="135" width="13" height="7" fill="#f4f4f4" stroke="#888" stroke-width="0.8"/>
<path d="M122.5 138.5 V140 H129.5 V138.5" stroke="#777" stroke-width="0.9" fill="none"/>
<rect x="115.6" y="122.6" width="21" height="4.6" rx="0.8" fill="#ffffff" stroke="#4eaa10" stroke-width="1.2"/>
<rect x="117.3" y="124.2" width="8" height="1.6" fill="#b8b8b8"/>
<rect x="126.5" y="123.8" width="0.9" height="2.4" fill="#111"/>
<path d="M126 127 V133 M121.5 129 L126 133.5 L130.5 129" stroke="#3caa12" stroke-width="2.6" fill="none" stroke-linecap="round" stroke-linejoin="round"/>
<!-- close -->
<path d="M154.5 127 L167.5 139.5 M167.5 127 L154.5 139.5" stroke="#6e6e6c" stroke-width="3.8" stroke-linecap="round"/>
<path d="M154.5 127 L167.5 139.5 M167.5 127 L154.5 139.5" stroke="#9a9a98" stroke-width="2" stroke-linecap="round"/>
<!-- separators -->
<g fill="#cfcfcd">
<rect x="185" y="116" width="1" height="34"/><rect x="304" y="116" width="1" height="34"/><rect x="388" y="116" width="1" height="34"/>
<rect x="472" y="116" width="1" height="34"/><rect x="556" y="116" width="1" height="34"/><rect x="605" y="116" width="1" height="34"/><rect x="654" y="116" width="1" height="34"/>
</g>
<!-- cut -->
<path d="M202.8 122.3 Q204.5 121.8 205.3 122.8 L211.8 135.8 L209.6 137 Z" fill="#f4f4f4" stroke="#8a8a88" stroke-width="0.9" stroke-linejoin="round"/>
<path d="M218.2 122.3 Q216.5 121.8 215.7 122.8 L209.2 135.8 L211.4 137 Z" fill="#f4f4f4" stroke="#8a8a88" stroke-width="0.9" stroke-linejoin="round"/>
<circle cx="206" cy="139" r="3" fill="#ffffff" stroke="#cc1a1a" stroke-width="2.2"/>
<circle cx="215" cy="139" r="3" fill="#ffffff" stroke="#cc1a1a" stroke-width="2.2"/>
<!-- copy -->
<rect x="235.5" y="123.5" width="12" height="12.5" fill="#fafafa" stroke="#8a8a88" stroke-width="1"/>
<g fill="#9a9a98"><rect x="237.5" y="126" width="8" height="1"/><rect x="237.5" y="128" width="8" height="1"/><rect x="237.5" y="130" width="8" height="1"/><rect x="237.5" y="132" width="5" height="1"/></g>
<rect x="242.5" y="130.5" width="12" height="12" fill="#fafafa" stroke="#8a8a88" stroke-width="1"/>
<g fill="#9a9a98"><rect x="244.5" y="133" width="8" height="1"/><rect x="244.5" y="135" width="8" height="1"/><rect x="244.5" y="137" width="8" height="1"/><rect x="244.5" y="139" width="5" height="1"/></g>
<!-- paste -->
<rect x="271.2" y="124.6" width="16" height="17.5" rx="1.5" fill="#e6b56a" stroke="#b07a30" stroke-width="1"/>
<rect x="275.5" y="122.6" width="7.5" height="3.6" rx="1" fill="#f4f4f4" stroke="#777" stroke-width="0.9"/>
<rect x="279.6" y="130.7" width="11" height="11.8" fill="#fafafa" stroke="#777" stroke-width="1"/>
<path d="M281.5 133.5 H288.5 M281.5 135.5 H288.5 M281.5 137.5 H288.5 M281.5 139.5 H286" stroke="#8a8a88" stroke-width="0.8"/>
<!-- find -->
<path d="M331 136 L337.5 142" stroke="#2e3436" stroke-width="3.4" stroke-linecap="round"/>
<circle cx="326.8" cy="131.9" r="7" fill="url(#gLens)" stroke="#3a5ca8" stroke-width="2.4"/>
<!-- find replace -->
<path d="M365 136 L371.5 142" stroke="#2e3436" stroke-width="3.4" stroke-linecap="round"/>
<circle cx="362" cy="131.9" r="7" fill="url(#gLens)" stroke="#3a5ca8" stroke-width="2.4"/>
<path d="M373 125 L358.5 140.5" stroke="#b86a10" stroke-width="3.6" stroke-linecap="round"/>
<path d="M373 125 L358.5 140.5" stroke="#f5a623" stroke-width="2.2" stroke-linecap="round"/>
<circle cx="373.3" cy="124.7" r="1.6" fill="#e23a3a"/>
<path d="M359.2 139.8 L356.6 142.8" stroke="#2e3436" stroke-width="1.3"/>
<!-- undo (disabled) -->
<path d="M403 131 L409.5 124.8 V128.5 H415 Q423.5 128.5 423.5 134.5 Q423.5 140.5 416 140.5 L414.5 136.5 Q418.5 136.5 418.5 134 Q418.5 132.5 415 132.5 H409.5 V136.5 Z" fill="#f4eab8" stroke="#dcc98a" stroke-width="1"/>
<!-- redo -->
<path d="M458.5 131 L452 124.8 V128.5 H446.5 Q438 128.5 438 134.5 Q438 140.5 445.5 140.5 L447 136.5 Q443 136.5 443 134 Q443 132.5 446.5 132.5 H452 V136.5 Z" fill="#b6e09e" stroke="#8fc878" stroke-width="1"/>
<!-- unindent -->
<g stroke="#4f5450" stroke-width="2.1" stroke-linecap="round">
<path d="M496 124.5 H507.3 M487 128.5 H498.7 M487 132.8 H494.6 M487 136.5 H496.7 M496 140.5 H505.4"/>
<path d="M522 124.5 H533 M530.5 128.5 H542 M530.5 132.8 H537.7 M530.5 136.5 H540 M522 140.5 H530.7"/>
</g>
<path d="M507 128.8 L503.5 132.3 L507 135.8" stroke="#e87b10" stroke-width="2" fill="none"/>
<path d="M522 128.8 L525.5 132.3 L522 135.8" stroke="#e87b10" stroke-width="2" fill="none"/>
<!-- globe -->
<circle cx="580.5" cy="132.3" r="10" fill="url(#gGlobe)" stroke="#111d2c" stroke-width="1.2"/>
<path d="M573 127 Q575 124.5 578 125 L579 128 L576.5 131 L575 135.5 L573 133 Z M582 124.5 Q586.5 125.5 588.5 129 L586.5 131 L584 129 L582.5 130.5 L584 134 L581.5 137.5 L580.5 133 L578.5 130 Z" fill="#a8c4e0" opacity="0.85"/>
<!-- tools -->
<g stroke-linejoin="round" stroke-linecap="round">
<path d="M620.5 127.5 Q619.5 124 622 122.5 L623.8 124.6 L625.6 124.2 L626 122.4 L624.3 120.8 Q627.8 120.2 629 123.5 L638.3 132.8 Q641.8 132.2 642.5 135.5 L640.5 135 L639 136.6 L639.5 138.6 L641.4 139.8 Q638 141.8 635.8 138.5 L626.5 129.2 Q622.8 130 620.5 127.5 Z" fill="#dcdcd8" stroke="#6e6e6a" stroke-width="1"/>
<path d="M640.5 122.2 L642 123.7 L632 133.8 L630.5 132.3 Z" fill="#e8e8e6" stroke="#6e6e6a" stroke-width="0.9"/>
<path d="M631.3 133 L623 141.3" stroke="#24509a" stroke-width="5.4"/>
<path d="M631.3 133 L623 141.3" stroke="#6c9ee0" stroke-width="3.4"/>
</g>
<!-- fullscreen -->
<rect x="673" y="128" width="12" height="10" rx="1" fill="#f8f8f6" stroke="#8a8a88" stroke-width="1.4"/>
<rect x="675" y="131" width="8" height="5" fill="#ffffff" stroke="#c8c8c6" stroke-width="0.6"/>
<g fill="#4a7fc8">
<path d="M676 126.3 L679 123.2 L682 126.3 Z"/><path d="M676 139.8 L679 142.9 L682 139.8 Z"/>
<path d="M671.3 130 L668.2 133 L671.3 136 Z"/><path d="M686.7 130 L689.8 133 L686.7 136 Z"/>
</g>

<!-- ===== html5 toolbar ===== -->
<g stroke="#000" stroke-width="1.5" stroke-linejoin="round">
<rect x="12" y="201.8" width="20.5" height="22.2" rx="1.5" fill="#fff"/>
<path d="M47.8 202.8 H60 L66 208.8 V223 H47.8 Z" fill="#fdfdfb"/>
<rect x="82" y="201.8" width="19.5" height="21.5" rx="1.5" fill="#fff"/>
<path d="M122 203.3 H138.2 V222.3 H116.6 V208.7 Z" fill="#fdfdfb"/>
<path d="M152.5 202.5 H171.3 V223.3 H158 L152.5 217.8 Z" fill="#fdfdfb"/>
<path d="M187.5 201.8 H206.3 V222.3 H193 L187.5 216.8 Z" fill="#fdfdfb"/>
<path d="M222.6 203.4 H235.5 L241.3 209.2 V224 H222.6 Z" fill="#fdfdfb"/>
<path d="M271.7 202.5 H285 L290.4 207.9 V223.2 H271.7 Z" fill="#e0dedc"/>
<path d="M306.7 202.5 H320 L325.4 207.9 V223.2 H306.7 Z" fill="#e0dedc"/>
<path d="M355.5 202.7 H369 L374.3 208 V223.2 H355.5 Z" fill="#f2e6b8"/>
<path d="M390.5 202.7 H404 L409.3 208 V223.2 H390.5 Z" fill="#f2e6b8"/>
<path d="M425.5 202.7 H439 L444.3 208 V223.2 H425.5 Z" fill="#f2e6b8"/>
<path d="M460.5 202.7 H474 L479.3 208 V223.2 H460.5 Z" fill="#f2e6b8"/>
<path d="M495.5 202.7 H509 L514.3 208 V223.2 H495.5 Z" fill="#f2e6b8"/>
<rect x="543.5" y="202.5" width="21" height="20" rx="2" fill="#f8f8f8" stroke-width="1.8"/>
<rect x="578.5" y="202.5" width="21" height="20" rx="2" fill="#f8f8f8" stroke-width="1.8"/>
</g>
<!-- folded corners -->
<g fill="#f2f2f0" stroke="#000" stroke-width="0.9" stroke-linejoin="round">
<path d="M60 202.8 V208.8 H66"/>
<path d="M122 203.3 V208.7 H116.6"/>
<path d="M152.5 217.8 H158 V223.3"/>
<path d="M187.5 216.8 H193 V222.3"/>
<path d="M235.5 203.4 V209.2 H241.3"/>
<path d="M285 202.5 V207.9 H290.4"/><path d="M320 202.5 V207.9 H325.4"/>
<path d="M369 202.7 V208 H374.3"/><path d="M404 202.7 V208 H409.3"/><path d="M439 202.7 V208 H444.3"/><path d="M474 202.7 V208 H479.3"/><path d="M509 202.7 V208 H514.3"/>
</g>
<!-- fills -->
<g fill="#b8cbe0">
<rect x="13.8" y="203.5" width="17" height="6.5"/>
<rect x="13.8" y="211.5" width="17" height="6"/>
<rect x="13.8" y="219" width="17" height="3.3"/>
<rect x="49" y="205" width="2.4" height="14"/>
<rect x="83.5" y="203.3" width="16.5" height="18.5"/>
<rect x="135.3" y="206" width="2.2" height="14"/>
<rect x="153.8" y="203.8" width="16" height="12"/>
<rect x="189.5" y="203.6" width="15" height="2.8"/>
<rect x="224" y="219" width="15.5" height="3"/>
</g>
<g fill="#8a8a88">
<rect x="15.5" y="213.5" width="13.5" height="0.9"/><rect x="15.5" y="215.6" width="13.5" height="0.9"/>
<rect x="90" y="205.5" width="8.5" height="0.9"/><rect x="90" y="207.5" width="6" height="0.9"/>
<rect x="85" y="210" width="13.5" height="0.9"/><rect x="85" y="212.5" width="13.5" height="0.9"/><rect x="85" y="215" width="13.5" height="0.9"/><rect x="85" y="217.5" width="8" height="0.9"/>
</g>
<text x="84.6" y="208.6" font-family="Liberation Serif" font-weight="700" font-size="6" fill="#000">ff</text>
<g font-family="Liberation Sans" font-weight="700" fill="#000">
<text x="12.5" y="209.8" font-size="10.5" textLength="19.5" lengthAdjust="spacingAndGlyphs">sec</text>
<text x="48.6" y="217.8" font-size="9.5" font-weight="400" textLength="17" lengthAdjust="spacingAndGlyphs">nav</text>
<text x="117" y="218.5" font-size="9" font-weight="400" textLength="19.5" lengthAdjust="spacingAndGlyphs">side</text>
<text x="154.5" y="210.8" font-size="9.5" textLength="14" lengthAdjust="spacingAndGlyphs">H1</text>
<text x="158" y="217.5" font-size="6.5" font-weight="400" fill="#444">h2</text>
<text x="188.2" y="214.3" font-size="8.2" textLength="17.8" lengthAdjust="spacingAndGlyphs">head</text>
<text x="223.3" y="217" font-size="8.5" textLength="17" lengthAdjust="spacingAndGlyphs">foot</text>
<text x="272.3" y="222.3" font-size="9.5" textLength="17.5" lengthAdjust="spacingAndGlyphs">cap</text>
</g>
<!-- images in cap & figure -->
<rect x="273.5" y="204.5" width="10" height="8.5" fill="#8cc8a0" stroke="#222" stroke-width="0.8"/>
<path d="M273.9 212.6 L276.5 208.5 L279 211 L281 209 L283.2 212.6 Z" fill="#8a6a48"/>
<rect x="308.5" y="204.5" width="11" height="9.5" fill="#8cc8a0" stroke="#222" stroke-width="0.9"/>
<path d="M308.9 213.6 L311.5 209.5 L314 212 L316 210 L319.2 213.6 Z" fill="#8a6a48"/>
<circle cx="279" cy="207" r="1" fill="#f0c0d0"/><circle cx="314" cy="207" r="1" fill="#f0c0d0"/>
<!-- lang page content -->
<g fill="#9aa0a8">
<rect x="357" y="205" width="2.5" height="5"/><rect x="361" y="205" width="6" height="2"/><rect x="357" y="211" width="2.5" height="2.5"/><rect x="361" y="208.5" width="10" height="2"/>
<rect x="357" y="215" width="6" height="2"/><rect x="357" y="218.5" width="8" height="2"/>
</g>
<rect x="362.5" y="213.5" width="8.5" height="4" fill="#ff8a10"/>
<!-- ruby chars -->
<g transform="translate(391.5,204.5) scale(1.05)" fill="none" stroke="#d0242a" stroke-width="2.2" stroke-linecap="square"><path d="M3 2.5 H13 M1 7.5 H15 M8.2 2.5 V7.5 Q8 12.5 2 15.5 M9.8 7.5 V13.3 Q9.8 15.2 11.8 15.2 H15 V12.5"/></g>
<g transform="translate(426.5,204) scale(0.5)" fill="none" stroke="#d0242a" stroke-width="2.2" stroke-linecap="square"><path d="M3 2.5 H13 M1 7.5 H15 M8.2 2.5 V7.5 Q8 12.5 2 15.5 M9.8 7.5 V13.3 Q9.8 15.2 11.8 15.2 H15 V12.5"/></g>
<text x="426.2" y="221.5" font-family="Liberation Sans" font-weight="700" font-size="9.5" fill="#000" textLength="17" lengthAdjust="spacingAndGlyphs">(rp)</text>
<g transform="translate(461.5,204) scale(0.5)" fill="none" stroke="#d0242a" stroke-width="2.2" stroke-linecap="square"><path d="M3 2.5 H13 M1 7.5 H15 M8.2 2.5 V7.5 Q8 12.5 2 15.5 M9.8 7.5 V13.3 Q9.8 15.2 11.8 15.2 H15 V12.5"/></g>
<text x="461.2" y="221.5" font-family="Liberation Sans" font-weight="700" font-size="9.5" fill="#000" textLength="17" lengthAdjust="spacingAndGlyphs">(rt)</text>
<!-- clock -->
<circle cx="504.5" cy="213.3" r="7.6" fill="#fffde0" stroke="#c8101a" stroke-width="1.2"/>
<circle cx="504.5" cy="213.3" r="6.4" fill="#ffffff" stroke="#f0b010" stroke-width="1.6"/>
<path d="M501.5 210.5 L504.5 213.3 L507.5 210.5" stroke="#222" stroke-width="1" fill="none"/>
<!-- separators html toolbar -->
<g fill="#cfcfcd"><rect x="256.5" y="196" width="1" height="34"/><rect x="340" y="196" width="1" height="34"/><rect x="529" y="196" width="1" height="34"/></g>
<!-- video -->
<path d="M546.5 215.5 H558 Q562.5 215 562.5 211 L563 216 Q562.5 221 557 221 H546.5 Z" fill="#3c5c88" stroke="#1c2c48" stroke-width="0.7"/>
<g fill="#9cc4f4"><rect x="547.8" y="217.2" width="1.8" height="2.2"/><rect x="550.8" y="217.2" width="1.8" height="2.2"/><rect x="553.8" y="217.2" width="1.8" height="2.2"/><rect x="556.8" y="217.2" width="1.8" height="2.2"/></g>
<path d="M547.5 210 V214 Q547.5 217.5 554.5 217.5 Q561.5 217.5 561.5 214 V210" fill="#b8b8b8" stroke="#555" stroke-width="0.8"/>
<ellipse cx="554.5" cy="209.8" rx="7" ry="4.6" fill="#e4e4e4" stroke="#555" stroke-width="0.9"/>
<g fill="#888"><circle cx="554.5" cy="207.3" r="1"/><circle cx="551" cy="209.8" r="1"/><circle cx="558" cy="209.8" r="1"/><circle cx="554.5" cy="212.3" r="1"/><circle cx="554.5" cy="209.8" r="0.6"/></g>
<!-- audio -->
<path d="M583.3 207 L595.8 204.8 V208 L583.3 210.2 Z" fill="#2f6e9c"/>
<path d="M584.3 207 V217.5 M594.8 205 V215.8" stroke="#2f6e9c" stroke-width="2.2" fill="none"/>
<ellipse cx="582.6" cy="218.2" rx="3.3" ry="2.5" fill="#2f6e9c"/>
<ellipse cx="593.1" cy="216.5" rx="3.3" ry="2.5" fill="#2f6e9c"/>
<ellipse cx="581.8" cy="217.5" rx="1.2" ry="0.7" fill="#7ab0d8"/>
<ellipse cx="592.3" cy="215.8" rx="1.2" ry="0.7" fill="#7ab0d8"/>
<!-- math -->
<path d="M614.5 202.6 H627.5 L634 209 V222.3 H614.5 Z" fill="#f4f4f4" stroke="#b0b0b0" stroke-width="1"/>
<path d="M627.5 202.6 V209 H634" fill="#e4e4e4" stroke="#b0b0b0" stroke-width="0.8"/>
<path d="M617 206 H626 M617 208 H626" stroke="#c8c8c8" stroke-width="0.8"/>
<path d="M614.8 208.5 L635 221.8 H614.8 Z" fill="#3f6fd0" stroke="#1a3a98" stroke-width="0.9" stroke-linejoin="round"/>
<path d="M617.8 214.5 L625 219.3 H617.8 Z" fill="#f4f4f4" stroke="#1a3a98" stroke-width="0.6"/>
<!-- ===== sidebar ===== -->
<!-- combo folder -->
<path d="M9.2 289.5 Q9.2 288 10.5 288 H14.5 L16 289.3 H23.5 Q24.6 289.3 24.6 290.4 V301.8 Q24.6 302.9 23.5 302.9 H10.3 Q9.2 302.9 9.2 301.8 Z" fill="url(#gFolder)" stroke="#80602c" stroke-width="0.9"/>
<path d="M9.5 290.8 H24.3" stroke="#7a6a50" stroke-width="0.8"/>
<path d="M227.8 293 H238.5 L233.15 298.2 Z" fill="#2e3436"/>
<!-- Descargas expander & folder -->
<path d="M5.6 332.3 H15 L10.3 338.3 Z" fill="#cfe0f2"/>
<path d="M20.4 329.5 Q20.4 328 21.7 328 H25.5 L27 329.3 H34.6 Q35.8 329.3 35.8 330.5 V341.8 Q35.8 342.9 34.6 342.9 H21.5 Q20.4 342.9 20.4 341.8 Z" fill="url(#gFolder)" stroke="#80602c" stroke-width="0.9"/>
<path d="M20.7 330.8 H35.5" stroke="#7a6a50" stroke-width="0.8"/>
<!-- balena -->
<path d="M26.3 365.7 L31.7 371.2 L26.3 376.7 Z" fill="#2e3436"/>
<path d="M38.2 365.5 Q38.2 364 39.5 364 H43.3 L44.8 365.3 H52.4 Q53.6 365.3 53.6 366.5 V377.8 Q53.6 378.9 52.4 378.9 H39.3 Q38.2 378.9 38.2 377.8 Z" fill="url(#gFolder)" stroke="#80602c" stroke-width="0.9"/>
<path d="M38.5 366.8 H53.3" stroke="#7a6a50" stroke-width="0.8"/>
<!-- file icons -->
<g stroke="#8a8a88" stroke-width="0.9">
<path d="M21.5 413.8 H30.5 L33.6 416.9 V427.8 H21.5 Z" fill="#fbfbfb"/>
<path d="M21.5 449.8 H30.5 L33.6 452.9 V463.8 H21.5 Z" fill="#fbfbfb"/>
<path d="M21.5 485.8 H30.5 L33.6 488.9 V499.8 H21.5 Z" fill="#fbfbfb"/>
<path d="M21.5 521.8 H30.5 L33.6 524.9 V535.8 H21.5 Z" fill="#fbfbfb"/>
<path d="M21.5 593.8 H30.5 L33.6 596.9 V607.8 H21.5 Z" fill="#fbfbfb"/>
<path d="M21.5 665.8 H30.5 L33.6 668.9 V679.8 H21.5 Z" fill="#fbfbfb"/>
<path d="M21.5 701.8 H30.5 L33.6 704.9 V715.8 H21.5 Z" fill="#fbfbfb"/>
</g>
<!-- xlsx grid -->
<rect x="23" y="415.5" width="7.5" height="2" fill="#6a8ec8"/>
<g fill="#a0a0a0"><rect x="23" y="418.5" width="9" height="7.5"/></g>
<path d="M23 420.5 H32 M23 422.5 H32 M23 424.5 H32 M25.3 418.5 V426 M27.6 418.5 V426 M29.9 418.5 V426" stroke="#f4f4f4" stroke-width="0.7"/>
<!-- doc text lines with orange block -->
<g><rect x="23.2" y="452.4" width="5" height="1.1" fill="#8a8a8a"/><rect x="23.2" y="454.4" width="6.5" height="1.1" fill="#9a9a9a"/><rect x="23.2" y="457.0" width="8.8" height="0.9" fill="#b0b0b0"/>
<rect x="23.4" y="459.0" width="4.4" height="3.4" fill="#e8a020" stroke="#5a5a5a" stroke-width="0.7"/><rect x="29" y="459.4" width="3" height="0.9" fill="#9a9a9a"/><rect x="29" y="461.4" width="3" height="0.9" fill="#9a9a9a"/></g>
<g><rect x="23.2" y="524.4" width="5" height="1.1" fill="#8a8a8a"/><rect x="23.2" y="526.4" width="6.5" height="1.1" fill="#9a9a9a"/><rect x="23.2" y="529.0" width="8.8" height="0.9" fill="#b0b0b0"/>
<rect x="23.4" y="531.0" width="4.4" height="3.4" fill="#e8a020" stroke="#5a5a5a" stroke-width="0.7"/><rect x="29" y="531.4" width="3" height="0.9" fill="#9a9a9a"/><rect x="29" y="533.4" width="3" height="0.9" fill="#9a9a9a"/></g>
<g><rect x="23.2" y="596.4" width="5" height="1.1" fill="#8a8a8a"/><rect x="23.2" y="598.4" width="6.5" height="1.1" fill="#9a9a9a"/><rect x="23.2" y="601.0" width="8.8" height="0.9" fill="#b0b0b0"/>
<rect x="23.4" y="603.0" width="4.4" height="3.4" fill="#e8a020" stroke="#5a5a5a" stroke-width="0.7"/><rect x="29" y="603.4" width="3" height="0.9" fill="#9a9a9a"/><rect x="29" y="605.4" width="3" height="0.9" fill="#9a9a9a"/></g>
<g><rect x="23.2" y="668.4" width="5" height="1.1" fill="#8a8a8a"/><rect x="23.2" y="670.4" width="6.5" height="1.1" fill="#9a9a9a"/><rect x="23.2" y="673.0" width="8.8" height="0.9" fill="#b0b0b0"/>
<rect x="23.4" y="675.0" width="4.4" height="3.4" fill="#e8a020" stroke="#5a5a5a" stroke-width="0.7"/><rect x="29" y="675.4" width="3" height="0.9" fill="#9a9a9a"/><rect x="29" y="677.4" width="3" height="0.9" fill="#9a9a9a"/></g>
<g><rect x="23.2" y="704.4" width="5" height="1.1" fill="#8a8a8a"/><rect x="23.2" y="706.4" width="6.5" height="1.1" fill="#9a9a9a"/><rect x="23.2" y="709.0" width="8.8" height="0.9" fill="#b0b0b0"/>
<rect x="23.4" y="711.0" width="4.4" height="3.4" fill="#e8a020" stroke="#5a5a5a" stroke-width="0.7"/><rect x="29" y="711.4" width="3" height="0.9" fill="#9a9a9a"/><rect x="29" y="713.4" width="3" height="0.9" fill="#9a9a9a"/></g>
<g fill="#b4b4b4"><rect x="23" y="488.5" width="8.5" height="0.8"/><rect x="23" y="490.5" width="8.5" height="0.8"/><rect x="23" y="492.5" width="8.5" height="0.8"/><rect x="23" y="494.5" width="8.5" height="0.8"/><rect x="23" y="496.5" width="5.5" height="0.8"/></g>

<!-- package -->
<path d="M21.3 560.5 H34.6 V572.6 H21.3 Z" fill="#e8a838" stroke="#a06a10" stroke-width="0.9"/>
<rect x="22" y="561.5" width="12" height="4" fill="#f4ead8"/>
<path d="M27.5 557.6 L33 558.6 L32.2 562.5 L26.8 561.5 Z" fill="#f6efe0" stroke="#a06a10" stroke-width="0.8"/>
<!-- sql / apk icons (grey box) -->
<g>
<rect x="20.3" y="630.5" width="15" height="13" fill="#f4f4f4" stroke="#d8d8d8" stroke-width="0.8"/>
<rect x="21.8" y="632" width="12" height="10" fill="#7c7c7c"/>
<circle cx="33.3" cy="641.8" r="1.5" fill="#e8e8e8" stroke="#555" stroke-width="0.5"/>
<rect x="20.3" y="738.5" width="15" height="13" fill="#f4f4f4" stroke="#c8c8c8" stroke-width="0.8"/>
<rect x="21.8" y="740" width="12" height="10" fill="#7c7c7c"/>
<circle cx="33.3" cy="749.8" r="1.5" fill="#e8e8e8" stroke="#555" stroke-width="0.5"/>
</g>
<!-- hidden row icon partial -->
<rect x="21.5" y="389" width="12" height="3" fill="#fbfbfb" stroke="#8a8a88" stroke-width="0.9"/>

<!-- ===== bottom left tabs ===== -->
<path d="M14 781 V790.5 L9 785.8 Z" fill="#a8a8a8"/>
<path d="M235.5 781 V790.5 L241.5 785.8 Z" fill="#2e3436"/>
<path d="M45.2 779 Q45.2 777 47 777 H51.5 L53.5 779 H63.5 Q65 779 65 780.5 V784 H45.2 Z" fill="#a8aa90" stroke="#3c3c30" stroke-width="1"/>
<rect x="47" y="781" width="12" height="3" fill="#f4f4f0"/>
<path d="M43.8 783.3 H66.3 L65.5 792 Q65.4 793.5 64 793.5 H46 Q44.6 793.5 44.5 792 Z" fill="#c8caae" stroke="#3c3c30" stroke-width="1"/>
<path d="M113.2 790.5 L115.5 795 H129.8 L136 779.5 L135.3 775.5 Z" fill="#eef0f2" stroke="#16263c" stroke-width="1.1" stroke-linejoin="round"/>
<path d="M116.2 792.8 H129 L134.6 779" stroke="#9aa4b0" stroke-width="0.7" fill="none"/>
<path d="M119.5 774.3 H134.8 Q135.8 774.5 135.5 775.8 L129.8 790 H114.2 Q112.8 789.8 113.3 788.6 Z" fill="#3f6894" stroke="#16263c" stroke-width="1.1" stroke-linejoin="round"/>
<path d="M120.5 776 H133.5 L129 787" stroke="#5a86b8" stroke-width="0.8" fill="none"/>
<path d="M117.3 789.8 V797.8 L119.3 795.8 L121.3 797.8 V789.8 Z" fill="#d8341c" stroke="#8a1a0a" stroke-width="0.5"/>
<rect x="182.8" y="773.9" width="24" height="23.7" fill="#ffffff"/>
<path d="M194.8 773.9 V797.6 M182.8 785.7 H206.8" stroke="#cccccc" stroke-width="0.8"/>
<g fill="none" stroke="#111" stroke-width="1.3">
<path d="M184.8 776.5 L188.4 783.8 L192 776.5 M186.2 779.8 H190.6"/>
<path d="M203.8 777.6 Q202.5 776.2 200.5 776.4 Q197.5 776.8 197.5 780.1 Q197.5 783.6 200.5 783.8 Q202.5 783.9 203.8 782.6"/>
<path d="M184.8 789 H192 L188.4 796.2 Z"/>
<path d="M204 788.6 H200.8 Q197.5 788.6 197.5 792.2 Q197.5 795.8 200.8 795.8 H204 M197.8 792.2 H203.2"/>
</g>
<!-- editor tab close -->
<path d="M422.8 782 L431 790 M431 782 L422.8 790" stroke="#787878" stroke-width="2.6" stroke-linecap="round"/>
<path d="M422.8 782 L431 790 M431 782 L422.8 790" stroke="#d0d0d0" stroke-width="0.9" stroke-linecap="round"/>

<!-- ===== taskbar icons ===== -->
<path d="M20.8 872.5 H25.8 V877.5 H20.8 Z" fill="#fff" stroke="#1e1e1e" stroke-width="2.8"/>
<path d="M14.6 878.4 V884.3 H20.5 V882" stroke="#1e1e1e" stroke-width="2.6" fill="none"/>
<path d="M14.6 878.4 H16.5" stroke="#1e1e1e" stroke-width="2.6"/>
<!-- cabinet -->
<path d="M50.5 869 L52.5 867.2 H65.5 L67.5 869 V887.7 H50.5 Z" fill="#5a8cd8" stroke="#2a5ab0" stroke-width="1"/>
<rect x="52" y="870.2" width="14" height="7.5" fill="#6a9ae0" stroke="#2a5ab0" stroke-width="0.7"/>
<rect x="52" y="878.5" width="14" height="7.5" fill="#6a9ae0" stroke="#2a5ab0" stroke-width="0.7"/>
<path d="M55.8 873 V874.8 H62.2 V873 M55.8 881.3 V883.1 H62.2 V881.3" stroke="#fff" stroke-width="1.3" fill="none"/>
<!-- seamonkey-like -->
<circle cx="277.6" cy="878.2" r="11.3" fill="url(#gBlueCirc)"/>
<path d="M267.5 877.3 Q277.0 875.5 289.0 877.8" stroke="#a8a0f0" stroke-width="1.3" fill="none"/>
<path d="M266.3 890 Q272.0 884 275.5 876.5 Q278.0 868.5 283.2 869 Q286.5 869.5 285.5 876 Q283.5 884 277.0 885.5 Q274.0 886.5 272.5 884 Z" fill="#7ec0fa" stroke="#e4f4ff" stroke-width="0.7"/>
<circle cx="496.9" cy="878.2" r="11.3" fill="url(#gBlueCirc)"/>
<path d="M486.8 877.3 Q496.3 875.5 508.3 877.8" stroke="#a8a0f0" stroke-width="1.3" fill="none"/>
<path d="M485.6 890 Q491.3 884 494.8 876.5 Q497.3 868.5 502.5 869 Q505.8 869.5 504.8 876 Q502.8 884 496.3 885.5 Q493.3 886.5 491.8 884 Z" fill="#7ec0fa" stroke="#e4f4ff" stroke-width="0.7"/>
<!-- firefox -->
<circle cx="716" cy="879" r="10.6" fill="url(#gFF)"/>
<path d="M716.5 866.5 Q726.5 869 727.2 879 Q724.5 871.5 718 870 Z" fill="#ffd23a"/>
<path d="M705.8 873 Q707 869 709.5 868.8 L710 871.5 L712 869.5 Q713.2 872 712.5 874 Z" fill="#ff7a20"/>
<circle cx="715.8" cy="879.6" r="4.9" fill="#6a3ae8"/>
<path d="M710.8 878 Q711.5 873.8 716.5 873.6 Q719.5 874 719.8 876 Q716 874.8 714.5 877.5 Z" fill="#b24af0"/>
<path d="M708.2 876.5 Q711 873.5 716 874.8 L712.8 878 Z" fill="#ffab1c"/>
<!-- shutter -->
<g transform="translate(935.2,877.9)">
<path d="M-1 -8.5 Q6 -9.5 8 -7 Q2 -7.5 0 -3 Z" fill="#7ab4d8"/>
<path d="M8.5 -1 Q7.5 6 5 8 Q5.5 2 1 0 Z" fill="#7ab4d8"/>
<path d="M1 8.5 Q-6 9.5 -8 7 Q-2 7.5 0 3 Z" fill="#8abcd8"/>
<path d="M-8.5 1 Q-7.5 -6 -5 -8 Q-5.5 -2 -1 0 Z" fill="#dcdcdc"/>
<path d="M3 -6.5 Q8 -4 7.5 1 Q5.5 -3 1.5 -2.5 Z" fill="#6aa8d0"/>
</g>
<!-- bluefish -->
<path d="M1145 880 Q1145 871 1153 870.5 Q1160 871 1161 877 L1165.5 867.5 Q1164 876 1164 879 L1165 887 L1160.5 881 Q1158 888 1151 888 Q1145 887 1145 880 Z" fill="#2a70c0"/>
<ellipse cx="1154.2" cy="876.5" rx="2.6" ry="2" fill="#f0f0f0"/>
<circle cx="1155.3" cy="876.2" r="0.8" fill="#333"/>
<path d="M1146 883.5 Q1151 885 1155 883" stroke="#5a98e0" stroke-width="1" fill="none"/>
</svg>

</body></html>
